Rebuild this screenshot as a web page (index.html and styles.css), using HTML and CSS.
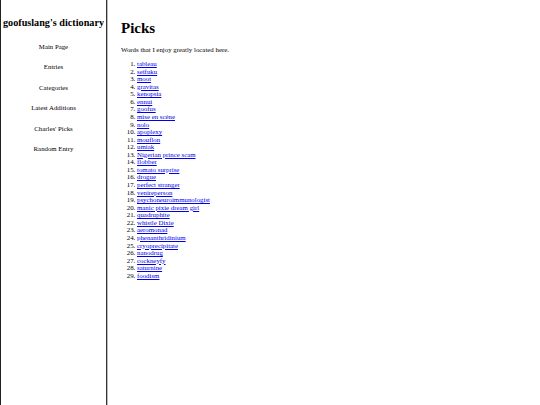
FILE: index.html
```html
<!DOCTYPE html>
<html>
<head>
<meta charset="utf-8">
<link rel="stylesheet" href="styles.css">
</head>
<body>
<div class="page">
  <nav class="sidebar">
    <div class="site-title">goofuslang's dictionary</div>
    <ul class="nav">
      <li>Main Page</li>
      <li>Entries</li>
      <li>Categories</li>
      <li>Latest Additions</li>
      <li>Charles' Picks</li>
      <li>Random Entry</li>
    </ul>
  </nav>
  <main class="content">
    <h1 class="title">Picks</h1>
    <p class="intro">Words that I enjoy greatly located here.</p>
    <ol class="picks">
      <li><a href="#">tableau</a></li>
      <li><a href="#">seifuku</a></li>
      <li><a href="#">moot</a></li>
      <li><a href="#">gravitas</a></li>
      <li><a href="#">kenopsia</a></li>
      <li><a href="#">ennui</a></li>
      <li><a href="#">goofus</a></li>
      <li><a href="#">mise en scène</a></li>
      <li><a href="#">nolo</a></li>
      <li><a href="#">apoplexy</a></li>
      <li><a href="#">mouflon</a></li>
      <li><a href="#">umiak</a></li>
      <li><a href="#">Nigerian prince scam</a></li>
      <li><a href="#">flobber</a></li>
      <li><a href="#">tomato surprise</a></li>
      <li><a href="#">drogue</a></li>
      <li><a href="#">perfect stranger</a></li>
      <li><a href="#">venireperson</a></li>
      <li><a href="#">psychoneuroimmunologist</a></li>
      <li><a href="#">manic pixie dream girl</a></li>
      <li><a href="#">quadruphite</a></li>
      <li><a href="#">whistle Dixie</a></li>
      <li><a href="#">aeromonad</a></li>
      <li><a href="#">phenanthridinium</a></li>
      <li><a href="#">cryoprecipitate</a></li>
      <li><a href="#">nanodrug</a></li>
      <li><a href="#">cockneyfy</a></li>
      <li><a href="#">saturnine</a></li>
      <li><a href="#">foodism</a></li>
    </ol>
  </main>
</div>
</body>
</html>
```
FILE: styles.css
```css
html, body {
  margin: 0;
  padding: 0;
  background: #fff;
}
body {
  font-family: "Liberation Serif", "Times New Roman", serif;
  color: #000;
}
.page {
  display: flex;
  height: 405px;
}
.sidebar {
  width: 105px;
  flex: none;
  border-left: 1px solid #222;
  border-right: 1px solid #333;
  box-shadow: 1px 0 0 #bbb;
  text-align: center;
}
.site-title {
  font-weight: bold;
  font-size: 10.2px;
  margin-top: 17px;
  white-space: nowrap;
}
.nav {
  list-style: none;
  margin: 15px 0 0;
  padding: 0;
  font-size: 6.8px;
  display: flex;
  flex-direction: column;
  gap: 12.8px;
}
.nav li {
  line-height: 7.6px;
}
.content {
  flex: 1;
  padding-left: 14px;
}
.title {
  font-size: 15px;
  font-weight: bold;
  margin: 20px 0 0;
}
.intro {
  font-size: 6.85px;
  margin: 9px 0 0;
}
.picks {
  font-size: 6.85px;
  margin: 7px 0 0;
  padding-left: 16px;
  line-height: 7.57px;
}
.picks a {
  color: #00e;
}
```
